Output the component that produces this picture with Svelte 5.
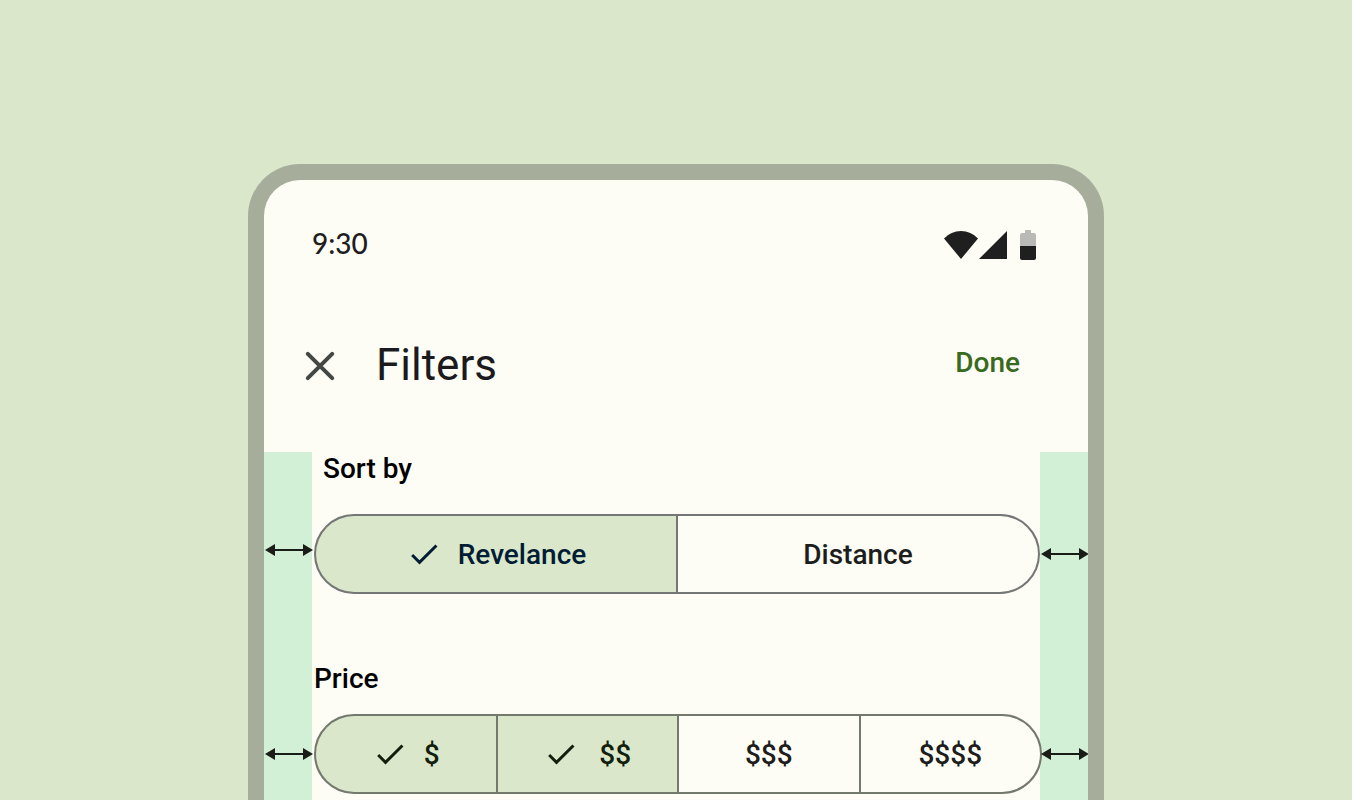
<script>
  let sort = $state('Revelance');
  let prices = $state({ $: true, $$: true, $$$: false, $$$$: false });
</script>

{#snippet check()}
  <svg class="check" viewBox="0 0 24 24" aria-hidden="true">
    <path d="M9 16.17 4.83 12l-1.42 1.41L9 19 21 7l-1.41-1.41z" />
  </svg>
{/snippet}

{#snippet arrow(place)}
  <svg class="arrow {place}" viewBox="0 0 48 12" aria-hidden="true">
    <path d="M0 6 10 0v5h28V0l10 6-10 6V7H10v5z" />
  </svg>
{/snippet}

<div class="stage">
  <main class="phone">
    <div class="status">
      <span class="time">9:30</span>
      <svg class="signals" viewBox="0 0 94 32" aria-hidden="true">
        <path d="M1 9.500Q8 2 18 2T35 9.500L18 30z" />
        <path d="M64 2v28H36z" />
        <path class="faint" d="M77 17V6q0-2 2-2h3V1h6v3h3q2 0 2 2v11z" />
        <path d="M77 17h16v12q0 2-2 2H79q-2 0-2-2z" />
      </svg>
    </div>

    <header>
      <button class="close" aria-label="Close">
        <svg viewBox="0 0 32 32" aria-hidden="true">
          <path d="M3.800 3.800l24.400 24.400M28.200 3.800l-24.400 24.400" />
        </svg>
      </button>
      <h1>Filters</h1>
      <button class="done">Done</button>
    </header>

    <div class="filters">
      <section class="sort">
        <h2 id="sort-label">Sort by</h2>
        <div class="segments" role="group" aria-labelledby="sort-label">
          {#each ['Revelance', 'Distance'] as name}
            <button aria-pressed={sort === name} onclick={() => (sort = name)}>
              {#if sort === name}{@render check()}{/if}
              <span>{name}</span>
            </button>
          {/each}
        </div>
        {@render arrow('left raised')}
        {@render arrow('right')}
      </section>

      <section class="price">
        <h2 id="price-label">Price</h2>
        <div class="segments" role="group" aria-labelledby="price-label">
          {#each Object.keys(prices) as name}
            <button
              class:wide={name === '$$'}
              aria-pressed={prices[name]}
              onclick={() => (prices[name] = !prices[name])}
            >
              {#if prices[name]}{@render check()}{/if}
              <span>{name}</span>
            </button>
          {/each}
        </div>
        {@render arrow('left')}
        {@render arrow('right')}
      </section>
    </div>
  </main>
</div>

<style>
  :global(body) {
    background: #dae7cb;
  }

  .stage {
    box-sizing: border-box;
    height: 100vh;
    min-height: 800px;
    padding-top: 164px;
    display: flex;
    justify-content: center;
    overflow: hidden;
    font-family: Roboto, sans-serif;
    color: #1d1d1d;
  }

  .phone {
    box-sizing: border-box;
    width: 100%;
    max-width: 856px;
    display: flex;
    flex-direction: column;
    border: 16px solid #a6ae9b;
    border-bottom: 0;
    border-radius: 52px 52px 0 0;
    background: #fefdf5;
    overflow: hidden;
  }

  button {
    margin: 0;
    padding: 0;
    border: 0;
    background: none;
    color: inherit;
    font: inherit;
    cursor: pointer;
  }

  .status {
    display: flex;
    align-items: center;
    justify-content: space-between;
    padding: 48px 51px 0 48px;
    height: 34px;
  }

  .time {
    padding-bottom: 4px;
    font: 500 28px/32px Lato, sans-serif;
  }

  .signals {
    width: 94px;
    height: 32px;
    fill: #1f1f1f;
  }

  .signals .faint {
    fill: #b9b9b5;
  }

  header {
    display: flex;
    align-items: center;
    margin-top: 62px;
    padding: 0 68px 0 40px;
    height: 84px;
  }

  .close {
    width: 32px;
    height: 32px;
  }

  .close svg {
    display: block;
    fill: none;
    stroke: #444844;
    stroke-width: 4;
    stroke-linecap: round;
  }

  h1 {
    flex: 1;
    margin: 0 0 2px 40px;
    font-size: 44px;
    line-height: 56px;
    font-weight: 400;
    color: #1b1b1f;
  }

  .done {
    margin-bottom: 6px;
    font-size: 28px;
    line-height: 40px;
    font-weight: 500;
    color: #386a20;
  }

  .filters {
    flex: 1;
    margin-top: 44px;
    background:
      linear-gradient(#d2f0d5, #d2f0d5) left / 48px 100% no-repeat,
      linear-gradient(#d2f0d5, #d2f0d5) right / 48px 100% no-repeat;
  }

  section {
    position: relative;
    padding: 0 48px 0 50px;
  }

  h2 {
    margin: 0;
    font-size: 28px;
    line-height: 34px;
    font-weight: 500;
    color: #000;
  }

  .sort h2 {
    padding: 0 0 28px 9px;
  }

  .price {
    margin-top: 68px;
    padding-right: 46px;
  }

  .price h2 {
    padding-bottom: 18px;
  }

  .segments {
    --outline: #74796d;
    box-sizing: border-box;
    display: grid;
    grid-auto-flow: column;
    grid-auto-columns: 1fr;
    gap: 2px;
    height: 80px;
    border: 2px solid var(--outline);
    border-radius: 40px;
    background: var(--outline);
    overflow: hidden;
  }

  .sort .segments {
    --outline: #747775;
  }

  .segments button {
    display: flex;
    align-items: center;
    justify-content: center;
    gap: 16px;
    background: #fefdf5;
    font-size: 28px;
    line-height: 40px;
    font-weight: 500;
  }

  .segments span {
    padding-top: 2px;
  }

  .segments button[aria-pressed='true'] {
    background: #dae7cb;
    color: #131f0d;
  }

  .sort .segments button[aria-pressed='true'] {
    color: #001d35;
  }

  .segments .wide {
    gap: 20px;
  }

  .check {
    width: 36px;
    height: 36px;
    fill: currentColor;
  }

  .arrow {
    position: absolute;
    bottom: 34px;
    width: 48px;
    height: 12px;
    fill: #1a1c18;
  }

  .left {
    left: 1px;
  }

  .right {
    right: -1px;
  }

  .raised {
    bottom: 38px;
  }
</style>
